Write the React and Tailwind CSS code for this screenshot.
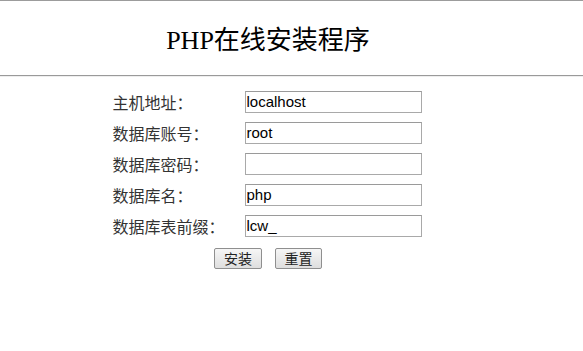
export default function App() {
  const rows = [
    ["主机地址：", "localhost"],
    ["数据库账号：", "root"],
    ["数据库密码：", ""],
    ["数据库名：", "php"],
    ["数据库表前缀：", "lcw_"],
  ];
  return (
    <div className="w-[583px] h-[351px] bg-white border-t border-[#9c9c9c]">
      <div className="w-[536px] h-[74px] flex justify-center pt-[25px]">
        <h1 className="text-[26px] leading-[30px] text-black" style={{ fontFamily: '"Liberation Serif", "Noto Sans CJK SC", serif' }}>
          PHP在线安装程序
        </h1>
      </div>
      <div className="h-[2px] border-t border-[#9a9a9a] border-b border-b-[#eeeeee]" />
      <div className="w-[534px] flex flex-col items-center pt-[14px]">
        <div className="flex flex-col gap-[9px] w-[309px]">
          {rows.map(([label, value]) => (
            <div key={label} className="flex items-center h-[22px]">
              <span className="w-[132px] text-[16px] leading-[22px] text-[#333]" style={{ fontFamily: '"Noto Sans CJK SC", sans-serif' }}>
                {label}
              </span>
              <div className="w-[177px] h-[22px] border border-[#a9a9a9] border-t-[#9a9a9a] bg-white pl-[1px] text-[15px] leading-[20px] text-black" style={{ fontFamily: '"Liberation Sans", Arial, sans-serif' }}>
                {value}
              </div>
            </div>
          ))}
        </div>
        <div className="flex gap-[13px] mt-[11px] ml-[2px]" style={{ fontFamily: '"Noto Sans CJK SC", sans-serif' }}>
          <div className="w-[48px] h-[21px] border border-[#8f8f8f] rounded-[2px] bg-gradient-to-b from-[#f6f6f6] to-[#dedede] flex items-center justify-center text-[14px] leading-[19px] text-[#222]">安装</div>
          <div className="w-[47px] h-[21px] border border-[#8f8f8f] rounded-[2px] bg-gradient-to-b from-[#f6f6f6] to-[#dedede] flex items-center justify-center text-[14px] leading-[19px] text-[#222]">重置</div>
        </div>
      </div>
    </div>
  );
}
